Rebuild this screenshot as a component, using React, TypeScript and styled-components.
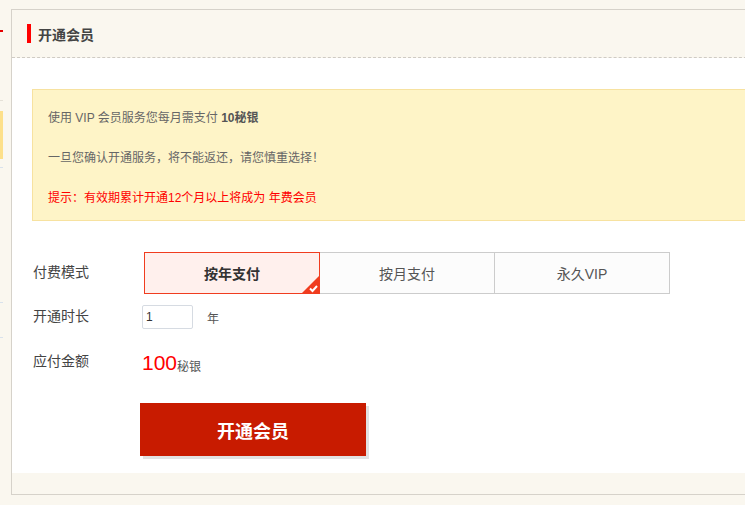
import React, { useState } from 'react'
import styled, { createGlobalStyle } from 'styled-components'

const GlobalStyle = createGlobalStyle`
  html, body {
    margin: 0;
    padding: 0;
    background: #faf7ef;
    overflow: hidden;
  }
  body {
    font-family: "Liberation Sans", "Noto Sans CJK SC", sans-serif;
    color: #333;
  }
`

const Page = styled.div`
  display: flex;
  gap: 8px;
  padding-top: 9px;
  width: 780px;
`

const SideEdge = styled.div`
  width: 3px;
  display: flex;
  flex-direction: column;
`

const SideMark = styled.div<{ color: string; h: number; top: number }>`
  height: ${({ h }) => h}px;
  background: ${({ color }) => color};
  margin-top: ${({ top }) => top}px;
`

const Panel = styled.div`
  width: 760px;
  border: 1px solid #d6d2ca;
  background: #fff;
`

const Header = styled.div`
  height: 48px;
  background: #faf7ef;
  border-bottom: 1px dashed #cfcbc4;
  display: flex;
  align-items: center;
  padding-left: 15px;
  box-sizing: border-box;
`

const RedBar = styled.span`
  width: 4px;
  height: 19px;
  background: #ff0000;
  margin-right: 7px;
`

const Title = styled.h2`
  margin: 0;
  font-size: 14px;
  font-weight: bold;
  color: #444;
`

const Body = styled.div`
  padding: 31px 0 17px 20px;
`

const Notice = styled.div`
  background: #fef4c7;
  border: 1px solid #f7e2a0;
  padding: 8px 15px 2px;
  font-size: 12px;
  color: #666;
`

const NoticeLine = styled.p<{ warn?: boolean }>`
  margin: 0;
  line-height: 40px;
  color: ${({ warn }) => (warn ? '#ff0000' : '#666')};
  b {
    color: #555;
  }
`

const Form = styled.div`
  padding-top: 31px;
  padding-left: 1px;
`

const Row = styled.div<{ h: number }>`
  display: flex;
  align-items: center;
  height: ${({ h }) => h}px;
`

const Label = styled.div`
  width: 109px;
  font-size: 14px;
  color: #444;
  margin-top: -4px;
`

const Options = styled.div`
  display: flex;
  margin-left: 2px;
`

const Option = styled.button<{ active: boolean }>`
  position: relative;
  width: 176px;
  height: 42px;
  margin-left: -1px;
  border: 1px solid ${({ active }) => (active ? '#f03c1f' : '#cccccc')};
  background: ${({ active }) => (active ? '#fff0ed' : '#fcfcfc')};
  z-index: ${({ active }) => (active ? 1 : 0)};
  font-family: inherit;
  font-size: 14px;
  font-weight: ${({ active }) => (active ? 'bold' : 'normal')};
  color: ${({ active }) => (active ? '#333' : '#555')};
  padding: 0;
  cursor: pointer;
  &:first-child {
    margin-left: 0;
  }
`

const Corner = styled.span`
  position: absolute;
  right: -1px;
  bottom: -1px;
  width: 19px;
  height: 19px;
  display: block;
`

const DurationInput = styled.input`
  width: 51px;
  height: 24px;
  box-sizing: border-box;
  border: 1px solid #d6dbe2;
  border-radius: 2px;
  padding: 0 3px;
  font-family: inherit;
  font-size: 12px;
  color: #333;
  outline: none;
`

const Unit = styled.span`
  margin-left: 14px;
  font-size: 12px;
  color: #555;
`

const Amount = styled.span`
  font-size: 21px;
  color: #ff0000;
  line-height: 1;
`

const AmountUnit = styled.span`
  font-size: 12px;
  color: #555;
  margin-top: 6px;
`

const SubmitRow = styled.div`
  padding: 19px 0 0 108px;
`

const Submit = styled.button`
  width: 226px;
  height: 53px;
  border: none;
  background: #c81b00;
  box-shadow: 3px 3px 0 #e2e2e2;
  color: #fff;
  font-family: inherit;
  font-size: 18px;
  font-weight: bold;
  cursor: pointer;
`

const Footer = styled.div`
  height: 21px;
  background: #faf7ef;
`

const plans = ['按年支付', '按月支付', '永久VIP']

const App = () => {
  const [plan, setPlan] = useState(0)
  const [years, setYears] = useState('1')

  return (
    <>
      <GlobalStyle />
      <Page>
        <SideEdge>
          <SideMark color="#e60000" h={2} top={21} />
          <SideMark color="#e5e1d8" h={1} top={68} />
          <SideMark color="#fde08a" h={48} top={10} />
          <SideMark color="#d9e2ec" h={1} top={8} />
          <SideMark color="#d9e2ec" h={1} top={134} />
          <SideMark color="#d9e2ec" h={1} top={34} />
        </SideEdge>
        <Panel>
          <Header>
            <RedBar />
            <Title>开通会员</Title>
          </Header>
          <Body>
            <Notice>
              <NoticeLine>
                使用 VIP 会员服务您每月需支付 <b>10秘银</b>
              </NoticeLine>
              <NoticeLine>一旦您确认开通服务，将不能返还，请您慎重选择！</NoticeLine>
              <NoticeLine warn>提示：有效期累计开通12个月以上将成为 年费会员</NoticeLine>
            </Notice>
            <Form>
              <Row h={42}>
                <Label>付费模式</Label>
                <Options>
                  {plans.map((p, i) => (
                    <Option key={p} active={plan === i} onClick={() => setPlan(i)}>
                      {p}
                      {plan === i && (
                        <Corner>
                          <svg width="19" height="19" viewBox="0 0 19 19">
                            <polygon points="19,0 19,19 0,19" fill="#f03c1f" />
                            <path d="M9 13.5 L11.5 16 L16 11" stroke="#fff" strokeWidth="2" fill="none" />
                          </svg>
                        </Corner>
                      )}
                    </Option>
                  ))}
                </Options>
              </Row>
              <Row h={46}>
                <Label>开通时长</Label>
                <DurationInput value={years} onChange={(e) => setYears(e.target.value)} />
                <Unit>年</Unit>
              </Row>
              <Row h={44}>
                <Label>应付金额</Label>
                <Amount>100</Amount>
                <AmountUnit>秘银</AmountUnit>
              </Row>
            </Form>
            <SubmitRow>
              <Submit>开通会员</Submit>
            </SubmitRow>
          </Body>
          <Footer />
        </Panel>
      </Page>
    </>
  )
}

export default App
